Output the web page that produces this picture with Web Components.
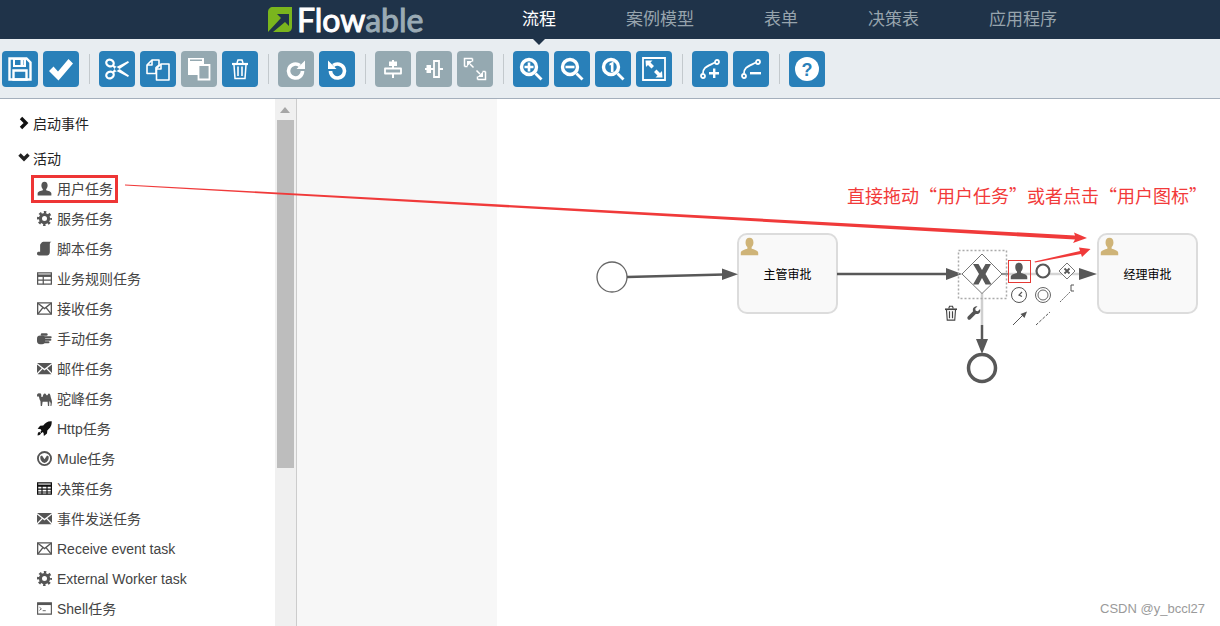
<!DOCTYPE html>
<html lang="zh">
<head>
<meta charset="utf-8">
<title>Flowable</title>
<style>
  html, body { margin: 0; height: 100%; overflow: hidden; background: #fff; }
  body { font-family: "Liberation Sans", "Noto Sans CJK SC", sans-serif; }
</style>
</head>
<body>
<modeler-app>
  <app-header></app-header>
  <app-toolbar></app-toolbar>
  <editor-body>
    <stencil-panel>
      <stencil-group slot="groups" label="启动事件"></stencil-group>
      <stencil-group slot="groups" label="活动" open>
        <stencil-item icon="user">用户任务</stencil-item>
        <stencil-item icon="gear">服务任务</stencil-item>
        <stencil-item icon="script">脚本任务</stencil-item>
        <stencil-item icon="rule">业务规则任务</stencil-item>
        <stencil-item icon="receive">接收任务</stencil-item>
        <stencil-item icon="hand">手动任务</stencil-item>
        <stencil-item icon="send">邮件任务</stencil-item>
        <stencil-item icon="camel">驼峰任务</stencil-item>
        <stencil-item icon="rocket">Http任务</stencil-item>
        <stencil-item icon="mule">Mule任务</stencil-item>
        <stencil-item icon="grid">决策任务</stencil-item>
        <stencil-item icon="send">事件发送任务</stencil-item>
        <stencil-item icon="receive" latin>Receive event task</stencil-item>
        <stencil-item icon="gear" latin>External Worker task</stencil-item>
        <stencil-item icon="shell">Shell任务</stencil-item>
      </stencil-group>
    </stencil-panel>
    <process-canvas>
      <bpmn-task x="440" y="134">主管审批</bpmn-task>
      <bpmn-task x="800" y="134">经理审批</bpmn-task>
    </process-canvas>
  </editor-body>
  <note-layer></note-layer>
</modeler-app>

<script>
// all icons are drawn on a 24x24 box
const ICONS = {
  save: '<path d="M1.500 1.500h17l4 4v17h-21z" fill="none" stroke="currentColor" stroke-width="2.400"/><path d="M6 2h11v7H6z" fill="none" stroke="currentColor" stroke-width="2"/><path d="M12.500 3h3v5h-3z" fill="currentColor"/><path d="M5.500 13.500h13v9h-13z" fill="none" stroke="currentColor" stroke-width="2.400"/>',
  check: '<path d="M0 14l4.500-4.500 4.500 5L19.500 2 24 6.500 9.500 23.500z" fill="currentColor"/>',
  cut: '<g fill="none" stroke="currentColor"><ellipse cx="5" cy="6" rx="3.800" ry="3.200" stroke-width="2.200" transform="rotate(25 5 6)"/><ellipse cx="5" cy="18" rx="3.800" ry="3.200" stroke-width="2.200" transform="rotate(-25 5 18)"/></g><path d="M8 7.500L24 18.500 23 20 10.500 13.500 8 10zM8 16.500L24 5.500 23 4 10.500 10.500 8 14z" fill="currentColor"/>',
  copy: '<g fill="none" stroke="currentColor" stroke-width="1.600" stroke-linejoin="round"><path d="M1 8l5-5h7v5l-3 2.500v6H1z"/><path d="M6 3v5H1"/><path d="M10.500 11.500l4.500-4.500h8v16H10.500z"/><path d="M15 7v5h-4.500"/></g>',
  paste: '<path d="M1 1h16v6h-6v11H1z" fill="currentColor"/><path d="M3 2.500h12V4H3z" fill="#95a9b1"/><path d="M11.500 8h11v14.500h-11z" fill="none" stroke="currentColor" stroke-width="1.800"/>',
  trash: '<g fill="none" stroke="currentColor" stroke-width="1.500"><path d="M6 8l1 13.500h10L18 8"/><path d="M4 7h16" stroke-width="2.200"/><path d="M9 6l1-3h4l1 3"/></g><path d="M9.200 9.500h1.600v9.500H9.200zM13.200 9.500h1.600v9.500h-1.600z" fill="currentColor"/>',
  redo: '<path d="M18.500 14a7 7 0 1 1-2.700-5.500" fill="none" stroke="currentColor" stroke-width="3.600"/><path d="M21 3.500v8.500h-8.500z" fill="currentColor"/>',
  undo: '<path d="M5.500 14a7 7 0 1 0 2.700-5.500" fill="none" stroke="currentColor" stroke-width="3.600"/><path d="M3 3.500v8.500h8.500z" fill="currentColor"/>',
  alignv: '<path d="M11 3h2v18h-2z" fill="currentColor"/><path d="M8 4.500h8v4.500H8z" fill="currentColor"/><path d="M4 11.500h16v5H4z" fill="#95a9b1" stroke="currentColor" stroke-width="1.800" stroke-linejoin="round"/>',
  alignh: '<path d="M3 11h18v2H3z" fill="currentColor"/><path d="M4.500 8h4.500v8H4.500z" fill="currentColor"/><path d="M12 4h5v16h-5z" fill="#95a9b1" stroke="currentColor" stroke-width="1.800"/>',
  same: '<g fill="none" stroke="currentColor" stroke-width="1.500"><path d="M1.500 9.500V1.500h8"/><path d="M9.500 1.500v3M1.500 9.500h3"/><path d="M22.500 14.500v8h-8M14.500 22.500v-3M22.500 14.500h-3"/><path d="M7 7l3.500 3.500M13.500 13.500L17 17"/></g><path d="M4 4h5.500L4 9.500zM20 20h-5.500l5.500-5.500z" fill="currentColor"/>',
  zoomin: '<path d="M10 2.500a7.500 7.500 0 1 0 0 15 7.500 7.500 0 0 0 0-15z" fill="none" stroke="currentColor" stroke-width="3.400"/><path d="M15.500 17.500l2-2 6 6-2 2z" fill="currentColor"/><path d="M8.700 5.500h2.600v3.200h3.200v2.600h-3.200v3.200H8.700v-3.200H5.500V8.700h3.200z" fill="currentColor"/>',
  zoomout: '<path d="M10 2.500a7.500 7.500 0 1 0 0 15 7.500 7.500 0 0 0 0-15z" fill="none" stroke="currentColor" stroke-width="3.400"/><path d="M15.500 17.500l2-2 6 6-2 2z" fill="currentColor"/><path d="M5.500 8.700h9v2.600h-9z" fill="currentColor"/>',
  zoom1: '<path d="M10 2.500a7.500 7.500 0 1 0 0 15 7.500 7.500 0 0 0 0-15z" fill="none" stroke="currentColor" stroke-width="3.400"/><path d="M15.500 17.500l2-2 6 6-2 2z" fill="currentColor"/><path d="M8.500 6.500l3-1.500h1v10h-2.600V8l-1.400.6z" fill="currentColor"/>',
  fit: '<path d="M1 1h22v22H1z" fill="none" stroke="currentColor" stroke-width="1.800"/><path d="M3.500 3.500h7l-2 2 3.500 3.500-2.500 2.500L6 8l-2 2zM20.500 20.500h-7l2-2-3.500-3.500 2.500-2.500L18 16l2-2z" fill="currentColor"/>',
  bendadd: '<g fill="none" stroke="currentColor" stroke-width="1.800"><circle cx="5" cy="19" r="2"/><circle cx="19" cy="5" r="2"/><path d="M5 16.500C5 10 9 9.500 17 5.500"/></g><path d="M15 11.500h2.400v3.600H21v2.400h-3.600V21H15v-3.500h-4v-2.400h4z" fill="currentColor"/>',
  bendremove: '<g fill="none" stroke="currentColor" stroke-width="1.800"><circle cx="5" cy="19" r="2"/><circle cx="19" cy="5" r="2"/><path d="M5 16.500C5 10 9 9.500 17 5.500"/></g><path d="M11 15h11v2.400H11z" fill="currentColor"/>',
  help: '<circle cx="12" cy="12" r="12" fill="currentColor"/>',
  // stencil icons
  user: '<path d="M12 1c3.300 0 5 2.600 5 6 0 2.500-1 4.500-2.300 5.700v2.100c3 1 8.300 2 8.300 5.200v3H1v-3c0-3.200 5.300-4.200 8.300-5.200v-2.100C8 11.500 7 9.500 7 7c0-3.400 1.700-6 5-6z" fill="currentColor"/>',
  gear: '<circle cx="12" cy="12" r="6.500" fill="none" stroke="currentColor" stroke-width="5"/><circle cx="12" cy="12" r="10" fill="none" stroke="currentColor" stroke-width="4" pathLength="80" stroke-dasharray="5 5" stroke-dashoffset="2.500"/>',
  script: '<path d="M7 3c1-2 3-2 4-2h12c-2 1-2.500 2-2.500 4v13c0 3-2 5-4 5H3c-2 0-3-1-3-3s1-3 3-3h2V6c0-1 1-2 2-3z" fill="currentColor"/>',
  rule: '<g fill="none" stroke="currentColor"><path d="M1 3h22v18H1z" stroke-width="2"/><path d="M1 7.500h22" stroke-width="4"/><path d="M1 14.500h22M10 8v13" stroke-width="2"/></g>',
  receive: '<path d="M1 3h22v18H1z" fill="none" stroke="currentColor" stroke-width="2.200"/><path d="M1.500 3.500L12 12 22.500 3.500M1.500 20.500L9.500 10.500M22.500 20.500L14.500 10.500" fill="none" stroke="currentColor" stroke-width="2.200"/>',
  send: '<path d="M0 3h24L12 12.500zM0 5.500l7.500 6L0 19zM24 5.500l-7.500 6L24 19zM9 12.800l3 2.400 3-2.400L23 21H1z" fill="currentColor"/>',
  hand: '<g fill="currentColor"><rect x="0" y="7" width="13" height="14" rx="5"/><rect x="6" y="3.500" width="11" height="4" rx="2"/><rect x="10" y="8.500" width="13.500" height="3.200" rx="1.600"/><rect x="10" y="12.500" width="13" height="3.200" rx="1.600"/><rect x="9" y="16.500" width="11" height="3.200" rx="1.600"/></g>',
  camel: '<path d="M0 7c0-2 1-3 3-3.500l3 .5c1 1 .8 3 1 5 .2 1 1.500 1 2 0 .8-2 1.500-5 3.500-5s2 3 3.500 3 1.500-3 3-3c2 0 2.500 3 3 6 .5 2 2 5 2 8l-1 6h-1.500l.3-5-1.800-3-.5 4v4h-2l-.5-7h-8l-1 7h-2l-.5-8c-1.500-2-2-5-2.500-7.500L2 9C1 9 0 8.500 0 7z" fill="currentColor"/>',
  rocket: '<path d="M23.500.5c.5 7-2.500 11-7 14.500l-.5 5-5 4-.5-5-1.500-1.500-2 2-2-2 2-2L6 13l-5-.5 4-5 5-.5C13.500 3 17 0 23.500.5z" fill="#111"/><path d="M1 22c0-3 1-4 2.500-5l3 3C5 22 3.500 23 1 23z" fill="#111"/>',
  mule: '<circle cx="12" cy="12" r="10.500" fill="none" stroke="currentColor" stroke-width="3"/><path d="M5.500 8.500l2.500-1.500 4 6 4-6 2.500 1.500c1 4-1 9.500-6.500 10.500C6.500 18 4.500 12.500 5.500 8.500z" fill="currentColor"/>',
  grid: '<g fill="none" stroke="#111"><path d="M1 3h22v18H1z" stroke-width="2"/><path d="M1 7.500h22" stroke-width="3.500"/><path d="M1 13h22M1 17.500h22M8 7v14M16 7v14" stroke-width="1.800"/></g>',
  shell: '<path d="M1 3h22v18H1z" fill="none" stroke="currentColor" stroke-width="1.800"/><path d="M1 3h22v3.500H1z" fill="currentColor"/><path d="M4 10l3 2.500L4 15M9 15.500h5" fill="none" stroke="currentColor" stroke-width="1.400"/>',
  wrench: '<path d="M22.500 5l-4 4-3.500-1-1-3.500 4-4C14 0 10 2 10 6.500c0 1 0 1.500.5 2.500L1.500 18c-1.500 1.500-1 3.500 0 4.500s3 1.500 4.500 0l9-9c4 1.500 9-1.500 7.500-8.500z" fill="currentColor"/>'
};

function svgIcon(name, size) {
  return `<svg xmlns="http://www.w3.org/2000/svg" width="${size}" height="${size}" viewBox="0 0 24 24">${ICONS[name]}</svg>`;
}

class ModelerApp extends HTMLElement {
  constructor() {
    super();
    this.attachShadow({ mode: "open" }).innerHTML = `
      <style>
        :host { display: flex; flex-direction: column; position: relative; height: 626px; overflow: hidden; }
      </style>
      <slot></slot>`;
  }
}

class AppHeader extends HTMLElement {
  constructor() {
    super();
    const items = ["流程", "案例模型", "表单", "决策表", "应用程序"];
    this.attachShadow({ mode: "open" }).innerHTML = `
      <style>
        :host { display: flex; align-items: center; height: 39px; flex: none; background: #1f3349; padding-left: 268px; position: relative; z-index: 2; }
        .logo { display: flex; align-items: center; gap: 5px; width: 254px; flex: none; }
        .word { font: 400 32px/39px Lato, sans-serif; color: #fff; -webkit-text-stroke: 1px currentColor; white-space: nowrap; }
        .word span { color: #9aabb5; }
        nav { display: flex; gap: 70px; }
        a { font-size: 17px; line-height: 39px; color: #97a4ad; position: relative; }
        a.on { color: #fff; }
        a.on::after { content: ""; position: absolute; left: 11px; top: 39px; border: 6px solid transparent; border-top-color: #1f3349; border-bottom: 0; }
      </style>
      <div class="logo">
        <svg width="24" height="25" viewBox="0 0 24 25">
          <path d="M5 0h19v20c0 3-2 5-5 5H0V5c0-3 2-5 5-5z" fill="#7ab51d"/>
          <path d="M0 25L13 11 9 7h12v12l-4-4L5 25z" fill="#1f3349"/>
        </svg>
        <div class="word">Flow<span>able</span></div>
      </div>
      <nav>${items.map((t, i) => `<a class="${i === 0 ? "on" : ""}">${t}</a>`).join("")}</nav>`;
  }
}

class ToolButton extends HTMLElement {
  constructor() {
    super();
    const name = this.getAttribute("icon");
    const mark = name === "help"
      ? `<svg width="24" height="24" viewBox="0 0 24 24">${ICONS.help}<text x="12" y="18.500" text-anchor="middle" font-family="Liberation Sans" font-weight="700" font-size="18" fill="#2980b9">?</text></svg>`
      : svgIcon(name, 24);
    this.attachShadow({ mode: "open" }).innerHTML = `
      <style>
        :host { display: flex; align-items: center; justify-content: center; width: 36px; height: 36px; flex: none; border-radius: 4px; background: #2980b9; color: #fff; }
        :host([disabled]) { background: #95a9b1; }
        svg { display: block; }
      </style>
      ${mark}`;
  }
}

class AppToolbar extends HTMLElement {
  constructor() {
    super();
    const groups = [
      [["save"], ["check"]],
      [["cut"], ["copy"], ["paste", 1], ["trash"]],
      [["redo", 1], ["undo"]],
      [["alignv", 1], ["alignh", 1], ["same", 1]],
      [["zoomin"], ["zoomout"], ["zoom1"], ["fit"]],
      [["bendadd"], ["bendremove"]],
      [["help"]]
    ];
    const html = groups.map(g =>
      `<div class="group">${g.map(b => `<tool-button icon="${b[0]}"${b[1] ? " disabled" : ""}></tool-button>`).join("")}</div>`
    ).join('<i class="sep"></i>');
    this.attachShadow({ mode: "open" }).innerHTML = `
      <style>
        :host { display: flex; align-items: center; height: 59px; flex: none; background: #e8edf1; border-bottom: 1px solid #a4afbc; padding-left: 2px; }
        .group { display: flex; gap: 5px; }
        .sep { width: 1px; height: 30px; background: #c3c9cd; margin: 0 9px 0 10px; flex: none; }
      </style>
      ${html}`;
  }
}

class EditorBody extends HTMLElement {
  constructor() {
    super();
    this.attachShadow({ mode: "open" }).innerHTML = `
      <style>
        :host { display: flex; flex: 1; min-height: 0; }
      </style>
      <slot></slot>`;
  }
}

class StencilPanel extends HTMLElement {
  constructor() {
    super();
    this.attachShadow({ mode: "open" }).innerHTML = `
      <style>
        :host { display: flex; width: 297px; flex: none; box-sizing: border-box; border-right: 1px solid #ccc; overflow: hidden; }
        .list { width: 275px; flex: none; padding-top: 9px; box-sizing: border-box; display: flex; flex-direction: column; gap: 5px; }
        .bar { width: 21px; flex: none; background: #f0f0f0; display: flex; flex-direction: column; align-items: center; box-sizing: border-box; padding: 0 1px 0 0; }
        .up { width: 0; height: 0; border: 5px solid transparent; border-top: 0; border-bottom: 6px solid #a6a6a6; margin-top: 8px; }
        .thumb { width: 17px; height: 348px; background: #bdbdbd; margin-top: 7px; }
      </style>
      <div class="list"><slot name="groups"></slot></div>
      <div class="bar"><div class="up"></div><div class="thumb"></div></div>`;
  }
}

class StencilGroup extends HTMLElement {
  constructor() {
    super();
    const open = this.hasAttribute("open");
    const arrow = open
      ? '<path d="M1.500 3.500l4.500 4.500 4.500-4.500" fill="none" stroke="#222" stroke-width="3.400"/>'
      : '<path d="M3 2l5 5-5 5" fill="none" stroke="#111" stroke-width="3.400"/>';
    this.attachShadow({ mode: "open" }).innerHTML = `
      <style>
        :host { display: block; }
        .head { display: flex; align-items: center; height: 30px; padding-left: 18px; gap: 1px; font-size: 14px; color: #222; }
        svg { flex: none; }
      </style>
      <div class="head"><svg width="14" height="14" viewBox="0 0 14 14">${arrow}</svg>${this.getAttribute("label")}</div>
      <slot></slot>`;
  }
}

class StencilItem extends HTMLElement {
  constructor() {
    super();
    this.attachShadow({ mode: "open" }).innerHTML = `
      <style>
        :host { display: flex; align-items: center; height: 30px; padding-left: 37px; gap: 5px; font-size: 14px; color: #444; white-space: nowrap; }
        :host([latin]) .text { padding-top: 2px; }
        svg { flex: none; color: #555; }
      </style>
      ${svgIcon(this.getAttribute("icon"), 15)}<span class="text"><slot></slot></span>`;
  }
}

class BpmnTask extends HTMLElement {
  constructor() {
    super();
    this.attachShadow({ mode: "open" }).innerHTML = `
      <style>
        :host { position: absolute; left: ${this.getAttribute("x")}px; top: ${this.getAttribute("y")}px; width: 101px; height: 81px; box-sizing: border-box; display: flex; align-items: center; justify-content: center; background: #f9f9f9; border: 2px solid #dcdcdc; border-radius: 10px; font-size: 12px; color: #000; }
        svg { position: absolute; left: 1px; top: 2px; color: #cfb478; }
      </style>
      ${svgIcon("user", 19)}<slot></slot>`;
  }
}

class ProcessCanvas extends HTMLElement {
  constructor() {
    super();
    const ink = "#585858";
    // the viewBox keeps page coordinates, the diagram is easier to read that way
    this.attachShadow({ mode: "open" }).innerHTML = `
      <style>
        :host { display: block; position: relative; flex: 1; background: linear-gradient(90deg, #f7f7f7 200px, #fff 200px); overflow: hidden; }
        svg.flow { position: absolute; inset: 0; }
      </style>
      <slot></slot>
      <svg class="flow" width="923" height="527" viewBox="297 99 923 527">
        <circle cx="612" cy="277" r="15" fill="#fff" stroke="#666" stroke-width="1.300"/>
        <path d="M627 277L724 274.500" stroke="${ink}" stroke-width="2.500"/>
        <path d="M738 274.200L722 280V268.500z" fill="${ink}"/>
        <path d="M837 274H950" stroke="${ink}" stroke-width="2.500"/>
        <path d="M962 274L946 280V268z" fill="${ink}"/>

        <path d="M1002 274H1082" stroke="#d5d5d5" stroke-width="2.500"/>
        <path d="M1002 274H1008" stroke="#777" stroke-width="1.500"/>
        <path d="M1097 274L1079 280V268z" fill="${ink}"/>
        <path d="M982 293V325" stroke="#cfcfcf" stroke-width="2.500"/>
        <path d="M982 325V342" stroke="${ink}" stroke-width="2.500"/>
        <path d="M982 354L976 339H988z" fill="${ink}"/>
        <circle cx="982" cy="368" r="13.500" fill="#fff" stroke="${ink}" stroke-width="3.500"/>

        <path d="M982 254L1002 274 982 293.500 962 274z" fill="#fff" stroke="#777" stroke-width="1"/>
        <path d="M973 264h5.500L982 270l3.500-6h5.500L985.500 274l6 10.500h-6L982 278l-3.500 6.500H973l6-10.500z" fill="${ink}"/>
        <rect x="958.500" y="250.500" width="48" height="48" fill="none" stroke="#aaa" stroke-width="1.500" stroke-dasharray="2 2"/>

        <g transform="translate(1010 262)"><svg width="18" height="18" viewBox="0 0 24 24" style="color:${ink}">${ICONS.user}</svg></g>
        <rect x="1008.500" y="260.500" width="22" height="22" fill="none" stroke="#e53935" stroke-width="1"/>
        <circle cx="1043" cy="271" r="6.500" fill="#fff" stroke="${ink}" stroke-width="2.200"/>
        <path d="M1067 263L1075 271 1067 279 1059 271z" fill="#fff" stroke="#777"/>
        <path d="M1064.500 268.500l5 5M1069.500 268.500l-5 5" stroke="${ink}" stroke-width="1.800"/>

        <circle cx="1019" cy="295" r="7.500" fill="#fff" stroke="#555"/>
        <path d="M1022 292l-3 3 3 1.500" fill="none" stroke="#555" stroke-width="1.200"/>
        <circle cx="1043" cy="295" r="7.500" fill="#fff" stroke="#666"/>
        <circle cx="1043" cy="295" r="5" fill="#fff" stroke="#666"/>
        <path d="M1060 302L1070 292" stroke="#666" stroke-dasharray="2 1"/>
        <path d="M1074 291h-3v-6h3" fill="none" stroke="#555"/>

        <path d="M1013 325L1024 314" stroke="#555"/>
        <path d="M1027 311.500L1024.500 318 1020.500 314z" fill="#555"/>
        <path d="M1036 325L1050 312" stroke="#555" stroke-dasharray="3 1.500"/>

        <g transform="translate(942 304)"><svg width="18" height="18" viewBox="0 0 24 24" style="color:#444">${ICONS.trash}</svg></g>
        <g transform="translate(967 306)"><svg width="14" height="14" viewBox="0 0 24 24" style="color:#555">${ICONS.wrench}</svg></g>
      </svg>`;
  }
}

class NoteLayer extends HTMLElement {
  constructor() {
    super();
    this.attachShadow({ mode: "open" }).innerHTML = `
      <style>
        :host { position: absolute; inset: 0; pointer-events: none; z-index: 3; }
        svg { position: absolute; inset: 0; }
        .box { position: absolute; left: 31px; top: 175px; width: 87px; height: 28px; box-sizing: border-box; border: 3px solid #ee3535; }
        .tip { position: absolute; left: 847px; top: 183px; font: 18px/24px "Noto Sans CJK SC", sans-serif; color: #f23a3a; white-space: nowrap; }
        .mark { position: absolute; right: 15px; top: 601px; font-size: 13px; line-height: 16px; color: #9a9a9a; white-space: nowrap; }
      </style>
      <svg width="1220" height="626" viewBox="0 0 1220 626">
        <path d="M125 184.400L1075 235.500 1074 232.500 1087 238 1073 243 1075 239.500 125 185.600z" fill="#f03a3a"/>
        <path d="M1034.500 261.500L1080 251 1079 247.500 1090.500 249 1082 257 1081 254 1035 262.500z" fill="#f03a3a"/>
      </svg>
      <div class="box"></div>
      <div class="tip">直接拖动“用户任务”或者点击“用户图标”</div>
      <div class="mark">CSDN @y_bccl27</div>`;
  }
}

customElements.define("modeler-app", ModelerApp);
customElements.define("app-header", AppHeader);
customElements.define("tool-button", ToolButton);
customElements.define("app-toolbar", AppToolbar);
customElements.define("editor-body", EditorBody);
customElements.define("stencil-panel", StencilPanel);
customElements.define("stencil-group", StencilGroup);
customElements.define("stencil-item", StencilItem);
customElements.define("bpmn-task", BpmnTask);
customElements.define("process-canvas", ProcessCanvas);
customElements.define("note-layer", NoteLayer);
</script>
</body>
</html>
